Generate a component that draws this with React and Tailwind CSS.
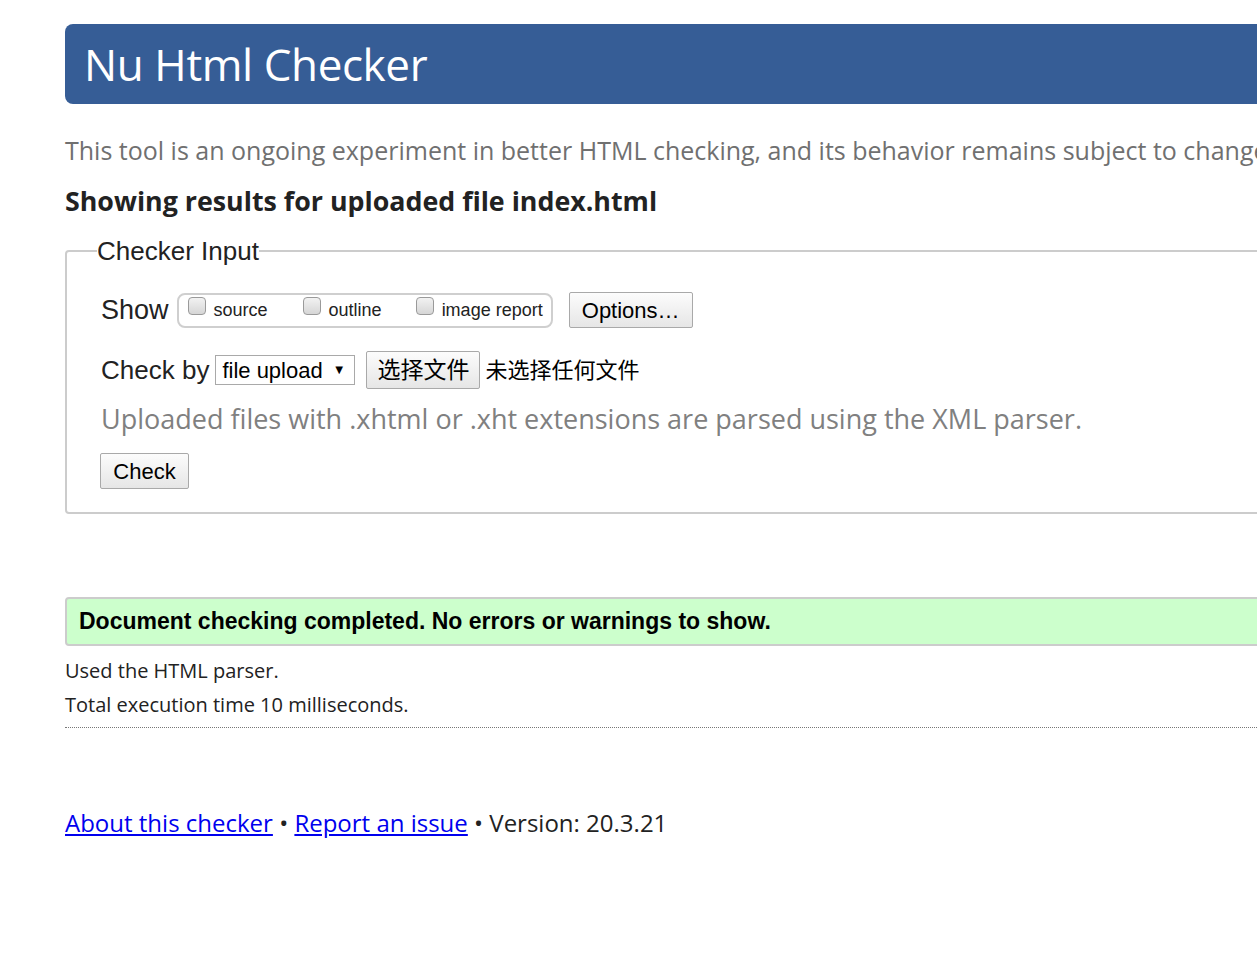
const Box = () => (
  <span className="-mt-[8px] inline-block h-[18px] w-[18px] rounded-[4px] border border-[#9a9a9a] bg-gradient-to-b from-[#f2f2f2] to-[#d6d6d6]" />
)

const Btn = ({ children, className = '' }) => (
  <span
    className={`inline-flex items-center justify-center border border-[#a9a9a9] bg-gradient-to-b from-[#fcfcfc] to-[#e6e6e6] rounded-[2px] text-black ${className}`}
  >
    {children}
  </span>
)

const App = () => {
  const ui = { fontFamily: '"Open Sans", "Noto Sans", sans-serif' }
  const arial = { fontFamily: '"Liberation Sans", Arial, sans-serif' }
  const cjk = { fontFamily: '"Liberation Sans", "Noto Sans CJK SC", sans-serif' }

  return (
    <div className="min-h-[968px] w-full overflow-hidden bg-white text-[#222]" style={ui}>
      <div className="ml-[65px] w-[1400px] pt-[24px]">
        <header className="flex h-[80px] items-center rounded-[8px] bg-[#365d96] pl-[19px]">
          <h1 className="text-[44px] leading-none tracking-[-0.4px] text-white">Nu Html Checker</h1>
        </header>

        <p className="mt-[29px] whitespace-nowrap text-[25px] leading-[34px] text-[#707070]">
          This tool is an ongoing experiment in better HTML checking, and its behavior remains subject to change
        </p>

        <h2 className="mt-[17px] text-[26.8px] font-bold leading-[34px] text-[#222]">Showing results for uploaded file index.html</h2>

        <fieldset className="mt-[18px] h-[278px] rounded-[4px] border-2 border-[#cccccc] pl-[34px] pr-4" style={arial}>
          <legend className="-ml-[4px] text-[26px] leading-[30px] text-[#222]">Checker Input</legend>

          <div className="mt-[26px] flex items-center">
            <span className="text-[27px] leading-[32px] text-[#222]">Show</span>
            <div className="ml-[8px] flex h-[35px] items-center rounded-[8px] border-2 border-[#cfcfcf] pl-[9px] pr-[8px] text-[18px] text-[#222]">
              <label className="flex items-center">
                <Box />
                <span className="ml-[8px]">source</span>
              </label>
              <label className="ml-[35px] flex items-center">
                <Box />
                <span className="ml-[8px]">outline</span>
              </label>
              <label className="ml-[34px] flex items-center">
                <Box />
                <span className="ml-[8px]">image report</span>
              </label>
            </div>
            <Btn className="ml-[16px] h-[36px] w-[124px] text-[22px]">Options…</Btn>
          </div>

          <div className="mt-[23px] flex items-center">
            <span className="text-[26px] leading-[32px] text-[#222]">Check by</span>
            <span className="ml-[6px] flex h-[30px] w-[140px] items-center border border-[#a9a9a9] bg-white pl-[6px] text-[22px] text-black">
              file upload
              <span className="ml-[10px] text-[13px]">▼</span>
            </span>
            <Btn className="ml-[11px] h-[38px] w-[114px] text-[23px]">
              <span style={cjk}>选择文件</span>
            </Btn>
            <span className="ml-[5px] text-[22px] text-black" style={cjk}>未选择任何文件</span>
          </div>

          <p className="mt-[12px] text-[27px] leading-[36px] text-[#808080]" style={ui}>
            Uploaded files with .xhtml or .xht extensions are parsed using the XML parser.
          </p>

          <Btn className="mt-[16px] -ml-[1px] h-[36px] w-[89px] text-[22px]">Check</Btn>
        </fieldset>

        <div className="mt-[83px] flex h-[49px] items-center rounded-[4px] border-2 border-[#cccccc] bg-[#ccffcc] pl-[12px]" style={arial}>
          <span className="text-[23px] font-bold text-black">Document checking completed. No errors or warnings to show.</span>
        </div>

        <p className="mt-[11px] text-[20px] leading-[28px] text-[#222]">Used the HTML parser.</p>
        <p className="mt-[6px] text-[20px] leading-[28px] text-[#222]">Total execution time 10 milliseconds.</p>
        <div className="mt-[8px] border-t border-dotted border-[#777]" />

        <footer className="mt-[79px] text-[24px] leading-[32px] text-[#222]">
          <a href="#" className="text-[#0000ee] underline">About this checker</a>
          {' • '}
          <a href="#" className="text-[#0000ee] underline">Report an issue</a>
          {' • Version: 20.3.21'}
        </footer>
      </div>
    </div>
  )
}

export default App
